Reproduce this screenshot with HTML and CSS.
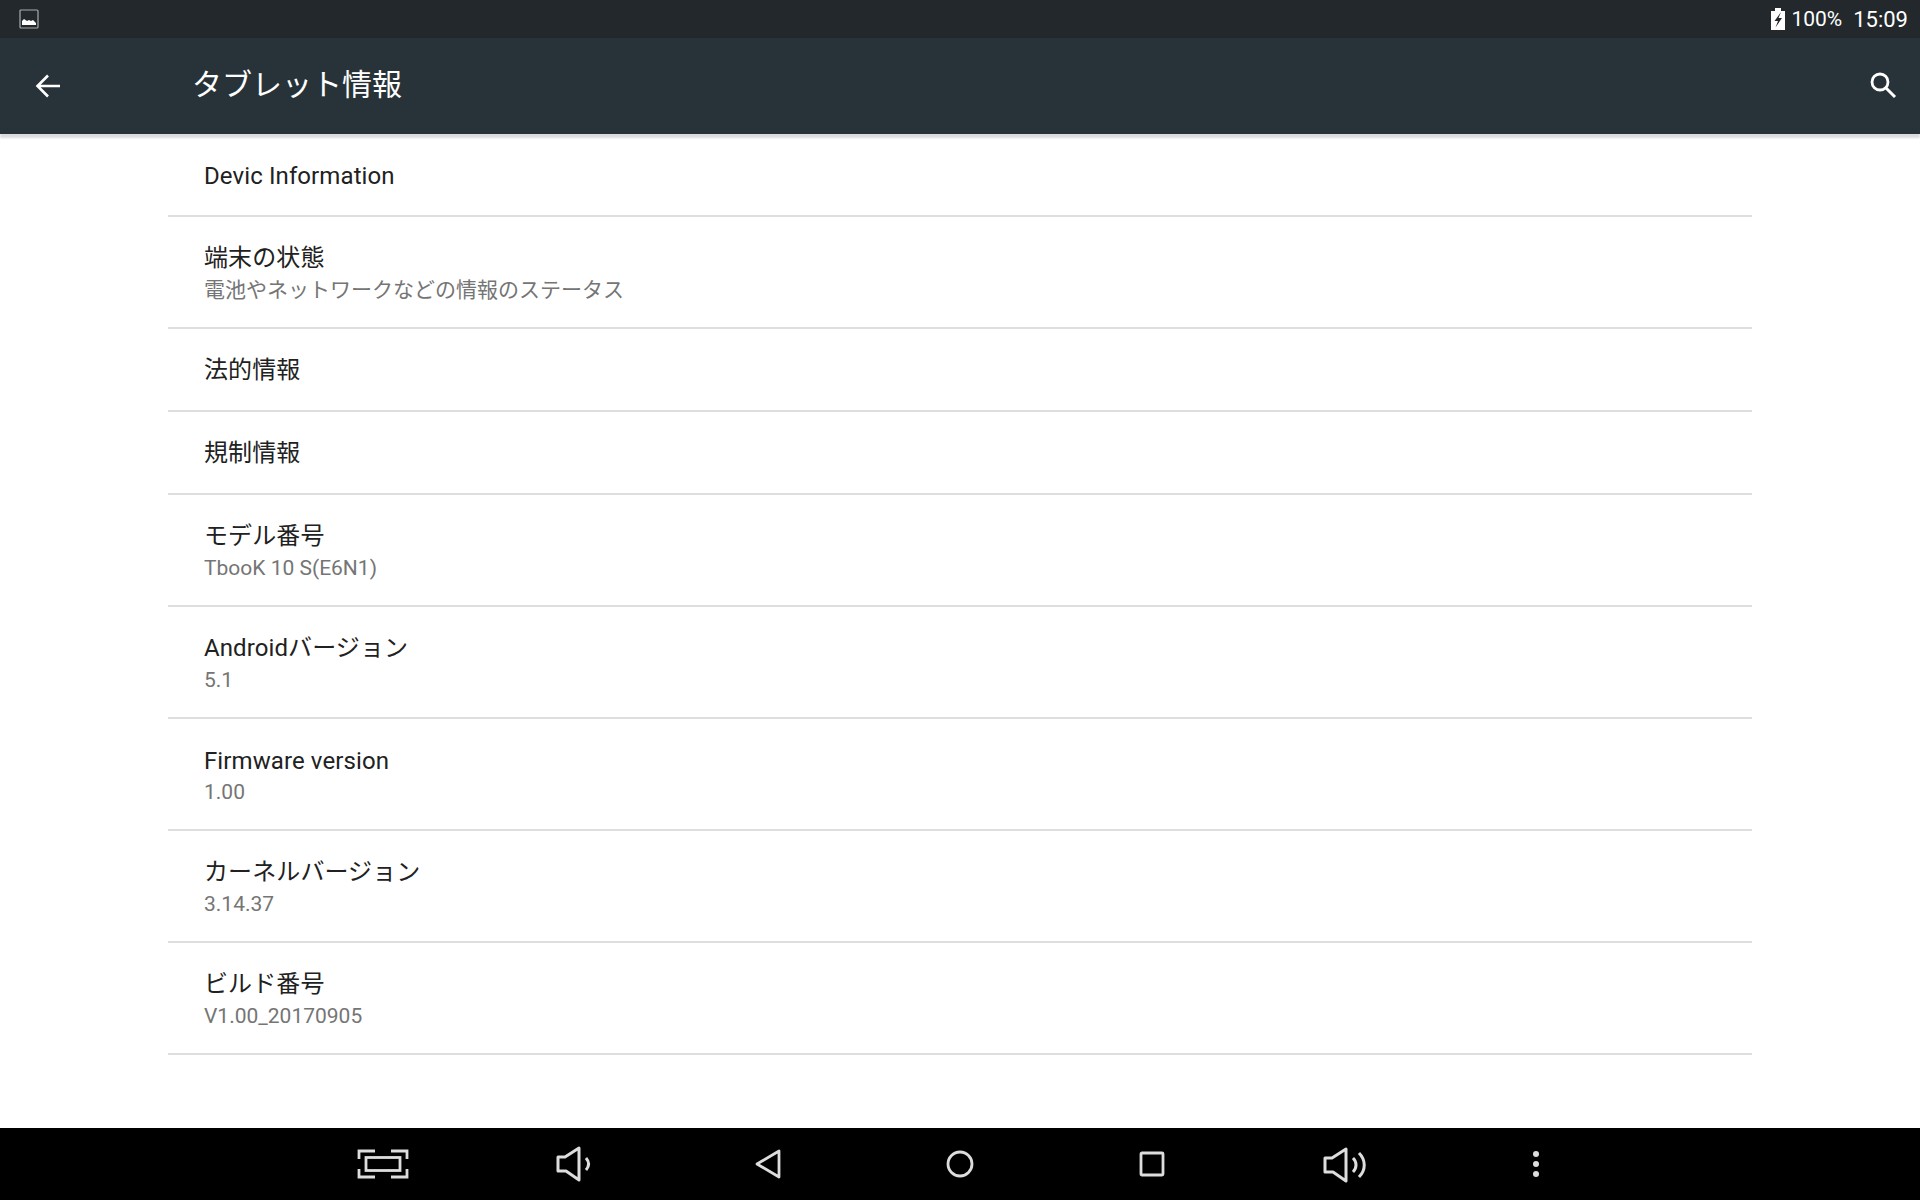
FILE: index.html
```html
<!DOCTYPE html>
<html lang="ja">
<head>
  <meta charset="UTF-8">
  <title>タブレット情報</title>
  <link rel="stylesheet" href="styles.css">
</head>
<body>
  <div class="statusbar">
    <svg class="status-pic" width="20" height="20" viewBox="0 0 20 20">
      <rect x="1" y="1" width="18" height="18" rx="1" fill="none" stroke="#a9acae" stroke-width="1.2"/>
      <path d="M3 16v-4l2-2 3 2 2-1 2 1 2-1 3 3v2z" fill="#fff"/>
    </svg>
    <div class="status-right">
      <svg width="14" height="22" viewBox="0 0 14 22">
        <path d="M0 3h4V0h6v3h4v19H0z" fill="#fff"/>
        <path d="M10 4 3.500 13H7l-2.500 6.500L11 10H7.500z" fill="#22282c"/>
      </svg>
      <span class="battery">100%</span>
      <span class="clock">15:09</span>
    </div>
  </div>

  <header class="toolbar">
    <svg class="back" width="26" height="26" viewBox="0 0 26 26">
      <path d="M25 13H3M13 2.500 2.500 13 13 23.500" fill="none" stroke="#fff" stroke-width="2.600"/>
    </svg>
    <h1>タブレット情報</h1>
    <svg class="search" width="28" height="28" viewBox="0 0 28 28">
      <circle cx="11" cy="11" r="8" fill="none" stroke="#fff" stroke-width="2.800"/>
      <path d="M17 17l9 9" stroke="#fff" stroke-width="3"/>
    </svg>
  </header>

  <main class="list">
    <div class="row row-single"><div class="title title-latin">Devic Information</div></div>
    <div class="row">
      <div class="title">端末の状態</div>
      <div class="summary">電池やネットワークなどの情報のステータス</div>
    </div>
    <div class="row row-single"><div class="title">法的情報</div></div>
    <div class="row row-single"><div class="title">規制情報</div></div>
    <div class="row">
      <div class="title">モデル番号</div>
      <div class="summary">TbooK 10 S(E6N1)</div>
    </div>
    <div class="row">
      <div class="title">Androidバージョン</div>
      <div class="summary">5.1</div>
    </div>
    <div class="row">
      <div class="title title-latin">Firmware version</div>
      <div class="summary">1.00</div>
    </div>
    <div class="row">
      <div class="title">カーネルバージョン</div>
      <div class="summary">3.14.37</div>
    </div>
    <div class="row">
      <div class="title">ビルド番号</div>
      <div class="summary">V1.00_20170905</div>
    </div>
  </main>

  <nav class="navbar">
    <div class="nav-item">
      <svg class="nav-capture" width="52" height="30" viewBox="0 0 52 30" fill="none" stroke="#ddd" stroke-width="2.800">
        <path d="M18 2H2v8M34 2h16v8M18 28H2v-8M34 28h16v-8"/>
        <rect x="9" y="8.500" width="34" height="13"/>
      </svg>
    </div>
    <div class="nav-item">
      <svg class="nav-vol-down" width="36" height="36" viewBox="0 0 36 36" fill="none" stroke="#ddd" stroke-width="3">
        <path d="M2 11h7L23 2v32L10 25H2z" stroke-linejoin="round"/>
        <path d="M30 12c3.500 4 3.500 8 0 12"/>
      </svg>
    </div>
    <div class="nav-item">
      <svg width="26" height="30" viewBox="0 0 26 30" fill="none" stroke="#ddd" stroke-width="2.800">
        <path d="M24 2v26L2 15z" stroke-linejoin="round"/>
      </svg>
    </div>
    <div class="nav-item">
      <svg width="28" height="28" viewBox="0 0 28 28" fill="none" stroke="#ddd" stroke-width="2.800">
        <circle cx="14" cy="14" r="12"/>
      </svg>
    </div>
    <div class="nav-item">
      <svg width="26" height="26" viewBox="0 0 26 26" fill="none" stroke="#ddd" stroke-width="2.800">
        <rect x="2" y="2" width="22" height="22" rx="1"/>
      </svg>
    </div>
    <div class="nav-item">
      <svg class="nav-vol-up" width="44" height="36" viewBox="0 0 44 36" fill="none" stroke="#ddd" stroke-width="3">
        <path d="M2 11h7L23 2v32L10 25H2z" stroke-linejoin="round"/>
        <path d="M30 11c4 4 4 10 0 14M36 6c7 7 7 17 0 24"/>
      </svg>
    </div>
    <div class="nav-item">
      <svg width="8" height="28" viewBox="0 0 8 28" fill="#ddd">
        <circle cx="4" cy="4" r="3"/>
        <circle cx="4" cy="14" r="3"/>
        <circle cx="4" cy="24" r="3"/>
      </svg>
    </div>
  </nav>
</body>
</html>
```

FILE: styles.css
```css
* {
  box-sizing: border-box;
}
html, body {
  height: 1200px;
  margin: 0;
  overflow: hidden;
}
body {
  display: flex;
  flex-direction: column;
  background-color: #fff;
  font-family: Roboto, "Noto Sans CJK JP", sans-serif;
}
.statusbar {
  display: flex;
  justify-content: space-between;
  align-items: center;
  height: 38px;
  padding: 0 12px 0 19px;
  background-color: #22282c;
  color: #fff;
}
.status-right {
  display: flex;
  align-items: center;
}
.battery {
  margin-left: 6px;
  font-size: 21px;
}
.clock {
  margin-left: 11px;
  font-size: 22px;
}
.toolbar {
  display: flex;
  align-items: center;
  height: 96px;
  padding: 0 23px 0 35px;
  background-color: #283339;
  box-shadow: 0 4px 2px rgba(0, 0, 0, 0.14);
}
.toolbar h1 {
  flex: 1;
  margin: -8px 0 0 131px;
  color: #fff;
  font-size: 30px;
  font-weight: 400;
}
.search {
  margin-top: -2px;
}
.list {
  flex: 1;
  padding: 0 168px;
}
.row {
  height: 112px;
  padding-top: 25px;
  border-bottom: 2px solid #dedede;
}
.row-single {
  height: 83px;
  padding-top: 25px;
}
.title {
  padding-left: 36px;
  height: 33px;
  color: #212121;
  font-size: 24px;
  letter-spacing: 0.1px;
  line-height: 33px;
}
.title-latin {
  padding-top: 1px;
}
.summary {
  padding-left: 36px;
  color: #757575;
  font-size: 21px;
  line-height: 28px;
  margin-top: 1px;
}
.navbar {
  display: flex;
  justify-content: center;
  height: 72px;
  background-color: #000;
}
.nav-item {
  display: flex;
  justify-content: center;
  align-items: center;
  width: 192px;
}
.nav-capture {
  margin-right: 2px;
}
.nav-vol-down {
  margin-right: 5px;
}
.nav-vol-up {
  margin: 1px 0 0 2px;
}
```
